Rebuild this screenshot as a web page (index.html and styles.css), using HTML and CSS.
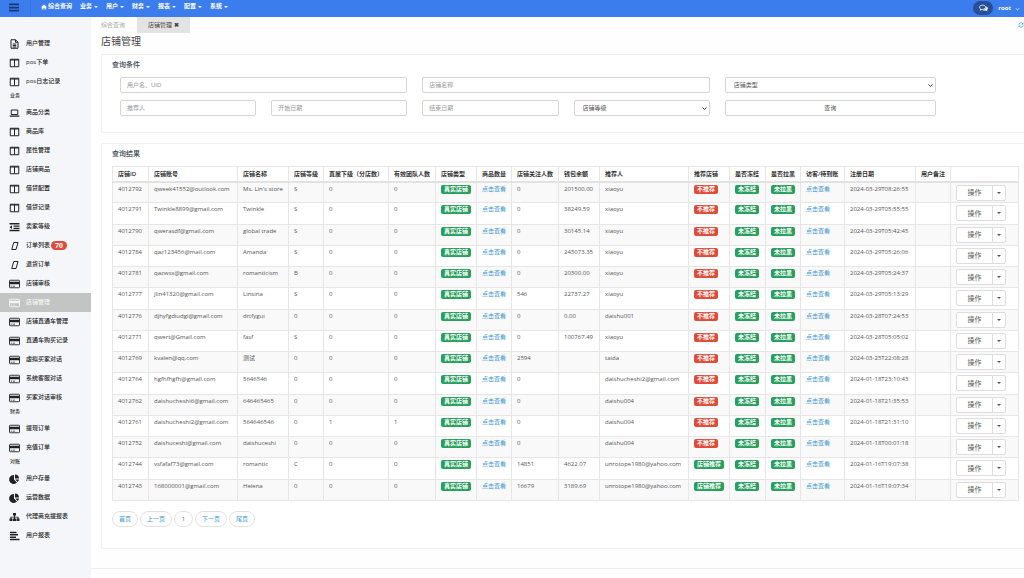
FILE: index.html
```html
<!DOCTYPE html>
<html lang="zh-CN">
<head>
<meta charset="utf-8">
<title>店铺管理</title>
<link rel="stylesheet" href="styles.css">
</head>
<body>
<svg class="sprite" aria-hidden="true">
  <symbol id="i-file" viewBox="0 0 20 20"><path d="M3 1.500h9l5 5v12H3zM12 1.500v5h5M6.500 10h7M6.500 13h7M6.500 16h7" fill="none" stroke="currentColor" stroke-width="2"/></symbol>
  <symbol id="i-columns" viewBox="0 0 20 20"><path d="M1.500 2.500h17v15h-17zM10 3v14M1 4h18" fill="none" stroke="currentColor" stroke-width="2"/></symbol>
  <symbol id="i-laptop" viewBox="0 0 20 20"><path d="M3.500 4h13v9h-13z" fill="none" stroke="currentColor" stroke-width="2"/><path d="M0 15h20v1.500l-1.500 1h-17L0 16.500z" fill="currentColor"/></symbol>
  <symbol id="i-indent" viewBox="0 0 20 20"><path d="M0 2h20v3H0zM8 7h12v2.500H8zM8 11.500h12V14H8zM0 15.500h20v3H0zM5 6.500v7.500L0 10.300z" fill="currentColor"/></symbol>
  <symbol id="i-slant" viewBox="0 0 20 20"><path d="M8.500 3h8.500l-4 14H4.500z" fill="none" stroke="currentColor" stroke-width="2"/></symbol>
  <symbol id="i-card" viewBox="0 0 22 20"><rect x="1" y="2.500" width="20" height="15" rx="1.500" fill="none" stroke="currentColor" stroke-width="1.800"/><path d="M1 5.500h20v5H1zM3.500 13.500h3v1.500h-3zM8 13.500h4v1.500H8z" fill="currentColor"/></symbol>
  <symbol id="i-pie" viewBox="0 0 20 20"><path d="M9 2v9l6 6A9 9 0 1 1 9 2zM11 1a8.500 8.500 0 0 1 8 8h-8zM11.500 11H19a8.500 8.500 0 0 1-2.500 5z" fill="currentColor"/></symbol>
  <symbol id="i-tree" viewBox="0 0 20 20"><path d="M7 2h6v5h-2v2.500h7V13h2v5h-6v-5h2v-1.800h-5V13h2v5H7v-5h2v-1.800H4V13h2v5H0v-5h2V9.500h7V7H7z" fill="currentColor"/></symbol>
  <symbol id="i-align" viewBox="0 0 20 20"><path d="M1 1.500h13v3H1zM1 6.200h16v3H1zM1 10.800h12v3H1zM1 15.500h19v3H1z" fill="currentColor"/></symbol>
  <symbol id="i-bars" viewBox="0 0 20 18"><path d="M0 1h20v3.500H0zM0 7.300h20v3.500H0zM0 13.500h20V17H0z" fill="currentColor"/></symbol>
  <symbol id="i-home" viewBox="0 0 20 20"><path d="M10 2l10 8.500-1.300 1.500L17 10.700V18h-5v-5H8v5H3v-7.300L1.300 12 0 10.500z" fill="currentColor"/></symbol>
  <symbol id="i-chat" viewBox="0 0 24 20"><path d="M9.500 2.500c5 0 8 2.300 8 5.500s-3 5.500-8 5.500H8L3.500 16l1-3.500C2.500 11.500 1.500 10 1.500 8c0-3.200 3-5.500 8-5.500z" fill="none" stroke="currentColor" stroke-width="2.200"/><path d="M19.500 6c2.500 1 4 2.800 4 5 0 1.800-1 3.200-2.200 4l1.200 3.500-4.500-2c-4 .7-7 0-9-1.500 6 0 11-3 10.500-9z" fill="currentColor"/></symbol>
  <symbol id="i-refresh" viewBox="0 0 20 20"><path d="M3 9a7 7 0 0 1 12.500-3.500M17 11a7 7 0 0 1-12.500 3.500" fill="none" stroke="currentColor" stroke-width="2.400"/><path d="M18 1.500V8h-6.500zM2 18.500V12h6.500z" fill="currentColor"/></symbol>
</svg>

<header class="topbar">
  <button class="menu-toggle" type="button" aria-label="菜单"><svg class="bars"><use href="#i-bars"/></svg></button>
  <nav class="topnav">
    <a href="#"><svg class="home"><use href="#i-home"/></svg>综合查询</a>
    <a href="#">业务<i class="caret"></i></a>
    <a href="#">用户<i class="caret"></i></a>
    <a href="#">财务<i class="caret"></i></a>
    <a href="#">报表<i class="caret"></i></a>
    <a href="#">配置<i class="caret"></i></a>
    <a href="#">系统<i class="caret"></i></a>
  </nav>
  <button class="chat" type="button" aria-label="消息"><svg><use href="#i-chat"/></svg></button>
  <a class="account" href="#">root<i class="chevron"></i></a>
</header>

<div class="shell">
  <nav class="sidebar">
    <a href="#"><svg><use href="#i-file"/></svg>用户管理</a>
    <a href="#"><svg><use href="#i-columns"/></svg>pos下单</a>
    <a href="#"><svg><use href="#i-columns"/></svg>pos日志记录</a>
    <h2>业务</h2>
    <a href="#"><svg><use href="#i-laptop"/></svg>商品分类</a>
    <a href="#"><svg><use href="#i-columns"/></svg>商品库</a>
    <a href="#"><svg><use href="#i-columns"/></svg>属性管理</a>
    <a href="#"><svg><use href="#i-columns"/></svg>店铺商品</a>
    <a href="#"><svg><use href="#i-columns"/></svg>借贷配置</a>
    <a href="#"><svg><use href="#i-columns"/></svg>借贷记录</a>
    <a href="#"><svg><use href="#i-indent"/></svg>卖家等级</a>
    <a href="#"><svg><use href="#i-slant"/></svg>订单列表<span class="count">70</span></a>
    <a href="#"><svg><use href="#i-slant"/></svg>退货订单</a>
    <a href="#"><svg><use href="#i-card"/></svg>店铺审核</a>
    <a href="#" class="active"><svg><use href="#i-card"/></svg>店铺管理</a>
    <a href="#"><svg><use href="#i-card"/></svg>店铺直通车管理</a>
    <a href="#"><svg><use href="#i-card"/></svg>直通车购买记录</a>
    <a href="#"><svg><use href="#i-card"/></svg>虚拟买家对话</a>
    <a href="#"><svg><use href="#i-card"/></svg>系统客服对话</a>
    <a href="#"><svg><use href="#i-card"/></svg>买家对话审核</a>
    <h2>财务</h2>
    <a href="#"><svg><use href="#i-card"/></svg>提现订单</a>
    <a href="#"><svg><use href="#i-card"/></svg>充值订单</a>
    <h2>对账</h2>
    <a href="#"><svg><use href="#i-pie"/></svg>用户存量</a>
    <a href="#"><svg><use href="#i-pie"/></svg>运营数据</a>
    <a href="#"><svg><use href="#i-tree"/></svg>代理商充提报表</a>
    <a href="#"><svg><use href="#i-align"/></svg>用户报表</a>
  </nav>

  <main class="main">
    <div class="tabs">
      <a href="#" class="tab">综合查询</a>
      <a href="#" class="tab current">店铺管理 <b>✖</b></a>
      <button class="refresh" type="button" aria-label="刷新"><svg><use href="#i-refresh"/></svg></button>
    </div>
    <h1 class="title">店铺管理</h1>

    <section class="panel">
      <h3>查询条件</h3>
      <form class="filters">
        <input class="wide" type="text" placeholder="用户名、UID" aria-label="用户名、UID">
        <input class="wide" type="text" placeholder="店铺名称" aria-label="店铺名称">
        <select aria-label="店铺类型"><option>店铺类型</option></select>
        <input type="text" placeholder="推荐人" aria-label="推荐人">
        <input type="text" placeholder="开始日期" aria-label="开始日期">
        <input type="text" placeholder="结束日期" aria-label="结束日期">
        <select aria-label="店铺等级"><option>店铺等级</option></select>
        <button type="button">查询</button>
      </form>
    </section>

    <section class="panel results">
      <h3>查询结果</h3>
      <table class="shops">
        <colgroup>
          <col class="w36"><col class="w89"><col class="w51"><col class="w35"><col class="w65"><col class="w47">
          <col class="w41"><col class="w35"><col class="w47"><col class="w41"><col class="w89"><col class="w41">
          <col class="w36"><col class="w35"><col class="w44"><col class="w71"><col class="w35"><col>
        </colgroup>
        <thead>
          <tr><th>店铺ID</th><th>店铺账号</th><th>店铺名称</th><th>店铺等级</th><th>直属下级（分店数）</th><th>有效团队人数</th><th>店铺类型</th><th>商品数量</th><th>店铺关注人数</th><th>钱包余额</th><th>推荐人</th><th>推荐店铺</th><th>是否冻结</th><th>是否拉黑</th><th>访客/待到账</th><th>注册日期</th><th>用户备注</th><th></th></tr>
        </thead>
        <tbody id="rows"></tbody>
      </table>
      <nav class="pager" aria-label="分页">
        <a href="#">首页</a><a href="#">上一页</a><a href="#" class="on">1</a><a href="#">下一页</a><a href="#">尾页</a>
      </nav>
    </section>
    <footer class="footer"></footer>
  </main>
</div>
<script src="app.js"></script>
</body>
</html>
```
FILE: styles.css
```css
* { box-sizing: border-box; }

body {
  margin: 0;
  min-height: 100vh;
  display: flex;
  flex-direction: column;
  overflow-x: hidden;
  background: #fefefe;
  color: #555;
  font: 6px/9px "Open Sans", "Noto Sans CJK SC", sans-serif;
}

a { color: #3c96cf; text-decoration: none; }
button, input, select { font: inherit; color: inherit; margin: 0; }
h1, h2, h3 { margin: 0; }
.sprite { display: none; }

/* Top bar */
.topbar {
  display: flex;
  align-items: flex-start;
  height: 17px;
  background: #3b7ded;
  color: #fff;
}
.menu-toggle {
  display: flex;
  align-items: flex-start;
  width: 31px;
  height: 17px;
  padding: 3px 0 0 9px;
  border: 0;
  border-right: 1px solid #3676e2;
  background: none;
  color: #173a72;
}
.bars { width: 10px; height: 9px; }
.topnav { display: flex; flex: 1; gap: 8px; padding: 2px 0 0 10px; }
.topnav a, .account { display: flex; align-items: center; color: #fff; font-weight: 700; white-space: nowrap; }
.home { width: 6px; height: 6px; margin-right: 1px; }
.caret {
  margin-left: 2px;
  border: 2px solid transparent;
  border-top-color: currentColor;
  border-bottom: 0;
}
.chat {
  display: flex;
  align-items: center;
  justify-content: center;
  width: 20px;
  height: 14px;
  margin-top: 1px;
  padding: 0;
  border: 0;
  border-radius: 7px;
  background: #274f98;
  color: #fff;
}
.chat svg { width: 9px; height: 8px; }
.account { gap: 5px; padding: 4px 5px 0; }
.chevron {
  width: 3px;
  height: 3px;
  border: solid #9cc0ff;
  border-width: 0 1px 1px 0;
  transform: rotate(45deg);
}

/* Layout */
.shell { display: flex; flex: 1; }
.main { flex: 1; min-width: 0; display: flex; flex-direction: column; }

/* Sidebar */
.sidebar { width: 91px; flex: none; padding-top: 17px; background: #f4f6f9; }
.sidebar a {
  display: flex;
  align-items: center;
  height: 19px;
  padding-left: 9px;
  color: #222;
  font-weight: 500;
  white-space: nowrap;
}
.sidebar svg { width: 11px; height: 10px; margin-right: 6px; }
.sidebar h2 { height: 12px; padding-left: 10px; color: #333; font-size: 5px; line-height: 9px; font-weight: 500; }
.sidebar .active { background: #c3c4c4; color: #f4f4f4; }
.count {
  margin-left: 1px;
  padding: 0 4px;
  border-radius: 5px;
  background: #e04b3a;
  color: #fff;
  font-size: 7px;
  font-weight: 700;
  line-height: 9px;
}

/* Tabs and title */
.tabs { display: flex; height: 16px; padding-left: 10px; line-height: 17px; white-space: nowrap; }
.tab { padding: 0 12px 0 0; color: #aaa; }
.tab.current { padding: 0 11px; background: #e3e3e3; color: #444; }
.refresh { margin-left: auto; padding: 0; border: 0; background: none; color: #3c96cf; line-height: 0; }
.refresh svg { width: 6px; height: 6px; }
.title { padding-left: 10px; color: #444; font-size: 10px; line-height: 16px; font-weight: 400; }

/* Panels */
.panel {
  margin: 5px 0 0 10px;
  padding: 5px 5px 16px 10px;
  border: 1px solid #efefef;
  border-right: 0;
  border-radius: 2px 0 0 2px;
  background: #fff;
}
.panel h3 { color: #3a4a50; font-size: 7px; line-height: 10px; font-weight: 500; }
.results { margin-top: 10px; padding-bottom: 21px; }

/* Filters */
.filters {
  display: grid;
  grid-template-columns: repeat(4, 136fr) 211fr;
  gap: 7px 15px;
  padding: 7px 83px 0 8px;
  font-family: "Liberation Sans", "Noto Sans CJK SC", sans-serif;
}
.filters .wide { grid-column: span 2; }
.filters input, .filters select, .filters button {
  width: 100%;
  min-width: 0;
  height: 16px;
  padding: 0 6px;
  border: 1px solid #d5d5d5;
  border-radius: 2px;
  background: #fff;
}
.filters input::placeholder { color: #999; }
.filters select {
  appearance: none;
  padding-left: 8px;
  background: #fff url("data:image/svg+xml,%3Csvg xmlns='http://www.w3.org/2000/svg' viewBox='0 0 10 6'%3E%3Cpath d='M1 1l4 4 4-4' fill='none' stroke='%23333' stroke-width='2'/%3E%3C/svg%3E") no-repeat right 2px center / 5px 3px;
}

/* Results table */
.shops {
  width: 100%;
  height: 335px;
  margin-top: 7px;
  border-collapse: collapse;
  table-layout: fixed;
}
.shops th, .shops td {
  padding: 2px 0 0 5px;
  border: 1px solid #e6e6e6;
  text-align: left;
  vertical-align: top;
  white-space: nowrap;
}
.shops th { height: 15px; padding-top: 3px; color: #333; font-weight: 600; border-bottom: 2px solid #e2e2e2; }
.shops td { height: 21px; }
.shops tbody tr:nth-child(odd) { background: #f9f9f9; }
.w35 { width: 35px; }
.w36 { width: 36px; }
.w41 { width: 41px; }
.w44 { width: 44px; }
.w47 { width: 47px; }
.w51 { width: 51px; }
.w65 { width: 65px; }
.w71 { width: 71px; }
.w89 { width: 89px; }

.badge {
  display: block;
  width: max-content;
  padding: 0 3px;
  border-radius: 2px;
  background: #26a05c;
  color: #fff;
  font-weight: 700;
}
.badge.no { background: #e04b3a; }

.ops { display: flex; }
.ops button {
  height: 16px;
  padding: 0;
  border: 1px solid #ddd;
  background: #fff;
  font-size: 7px;
}
.ops button:first-child { width: 37px; border-radius: 2px 0 0 2px; }
.ops button:last-child { display: grid; place-content: center; width: 14px; margin-left: -1px; border-radius: 0 2px 2px 0; }
.ops .caret { margin: 0; }

/* Pager and footer */
.pager { display: flex; gap: 2px; margin-top: 10px; }
.pager a {
  min-width: 19px;
  padding: 0 6px;
  border: 1px solid #e2e2e2;
  border-radius: 8px;
  background: #fff;
  line-height: 14px;
  text-align: center;
}
.pager .on { color: #c0392b; }
.footer { margin-top: 19px; border-top: 1px solid #eee; }
```
FILE: app.js
```js
// id, account, name, level, direct shops, team size, followers, balance, referrer, recommended, registered
const shops = [
  ["4012792", "qweek41552@outlook.com", "Ms. Lin's store", "S", 0, 0, 0, "201500.00", "xiaoyu", false, "2024-03-29T08:26:55"],
  ["4012791", "Twinkle8899@gmail.com", "Twinkle", "S", 0, 0, 0, "38249.59", "xiaoyu", false, "2024-03-29T05:55:55"],
  ["4012790", "qwerasdf@gmail.com", "global trade", "S", 0, 0, 0, "30145.14", "xiaoyu", false, "2024-03-29T05:42:45"],
  ["4012784", "qaz123456@mail.com", "Amanda", "S", 0, 0, 0, "243073.35", "xiaoyu", false, "2024-03-29T05:26:06"],
  ["4012781", "qazwsx@gmail.com", "romanticism", "B", 0, 0, 0, "20300.00", "xiaoyu", false, "2024-03-29T05:24:37"],
  ["4012777", "jlin41320@gmail.com", "Linsina", "S", 0, 0, 546, "22737.27", "xiaoyu", false, "2024-03-29T05:13:29"],
  ["4012776", "djhyfgdiudgi@gmail.com", "drtfygui", "0", 0, 0, 0, "0.00", "daishu001", false, "2024-03-28T07:24:53"],
  ["4012771", "qwert@Gmail.com", "fasf", "S", 0, 0, 0, "100767.49", "xiaoyu", false, "2024-03-28T05:05:02"],
  ["4012769", "kvalen@qq.com", "测试", "0", 0, 0, 2594, "", "taida", false, "2024-03-25T22:08:28"],
  ["4012764", "hgfhfhgfh@gmail.com", "5646546", "0", 0, 0, 0, "", "daishucheshi2@gmail.com", false, "2024-01-18T23:10:43"],
  ["4012762", "daishucheshi6@gmail.com", "646465465", "0", 0, 0, 0, "", "daishu004", false, "2024-01-18T21:35:53"],
  ["4012761", "daishucheshi2@gmail.com", "564646546", "0", 1, 1, 0, "", "daishu004", false, "2024-01-18T21:31:10"],
  ["4012752", "daishuceshi@gmail.com", "daishuceshi", "0", 0, 0, 0, "", "daishu004", false, "2024-01-18T00:01:18"],
  ["4012744", "vsfafaf73@gmail.com", "romantic", "C", 0, 0, 14851, "4622.07", "unrotope1980@yahoo.com", true, "2024-01-16T19:07:38"],
  ["4012743", "168000001@gmail.com", "Helena", "0", 0, 0, 16679, "3189.69", "unrotope1980@yahoo.com", true, "2024-01-16T19:07:34"]
];

const badge = (text, no) => `<span class="badge${no ? " no" : ""}">${text}</span>`;
const view = '<a href="#">点击查看</a>';
const ops = '<div class="ops"><button type="button">操作</button><button type="button" aria-label="更多操作"><i class="caret"></i></button></div>';

document.getElementById("rows").innerHTML = shops.map(
  ([id, account, name, level, direct, team, followers, balance, referrer, recommended, date]) => {
    const cells = [
      id, account, name, level, direct, team, badge("真实店铺"), view, followers, balance, referrer,
      recommended ? badge("店铺推荐") : badge("不推荐", true),
      badge("未冻结"), badge("未拉黑"), view, date, "", ops
    ];
    return `<tr>${cells.map(c => `<td>${c}</td>`).join("")}</tr>`;
  }
).join("");
```
